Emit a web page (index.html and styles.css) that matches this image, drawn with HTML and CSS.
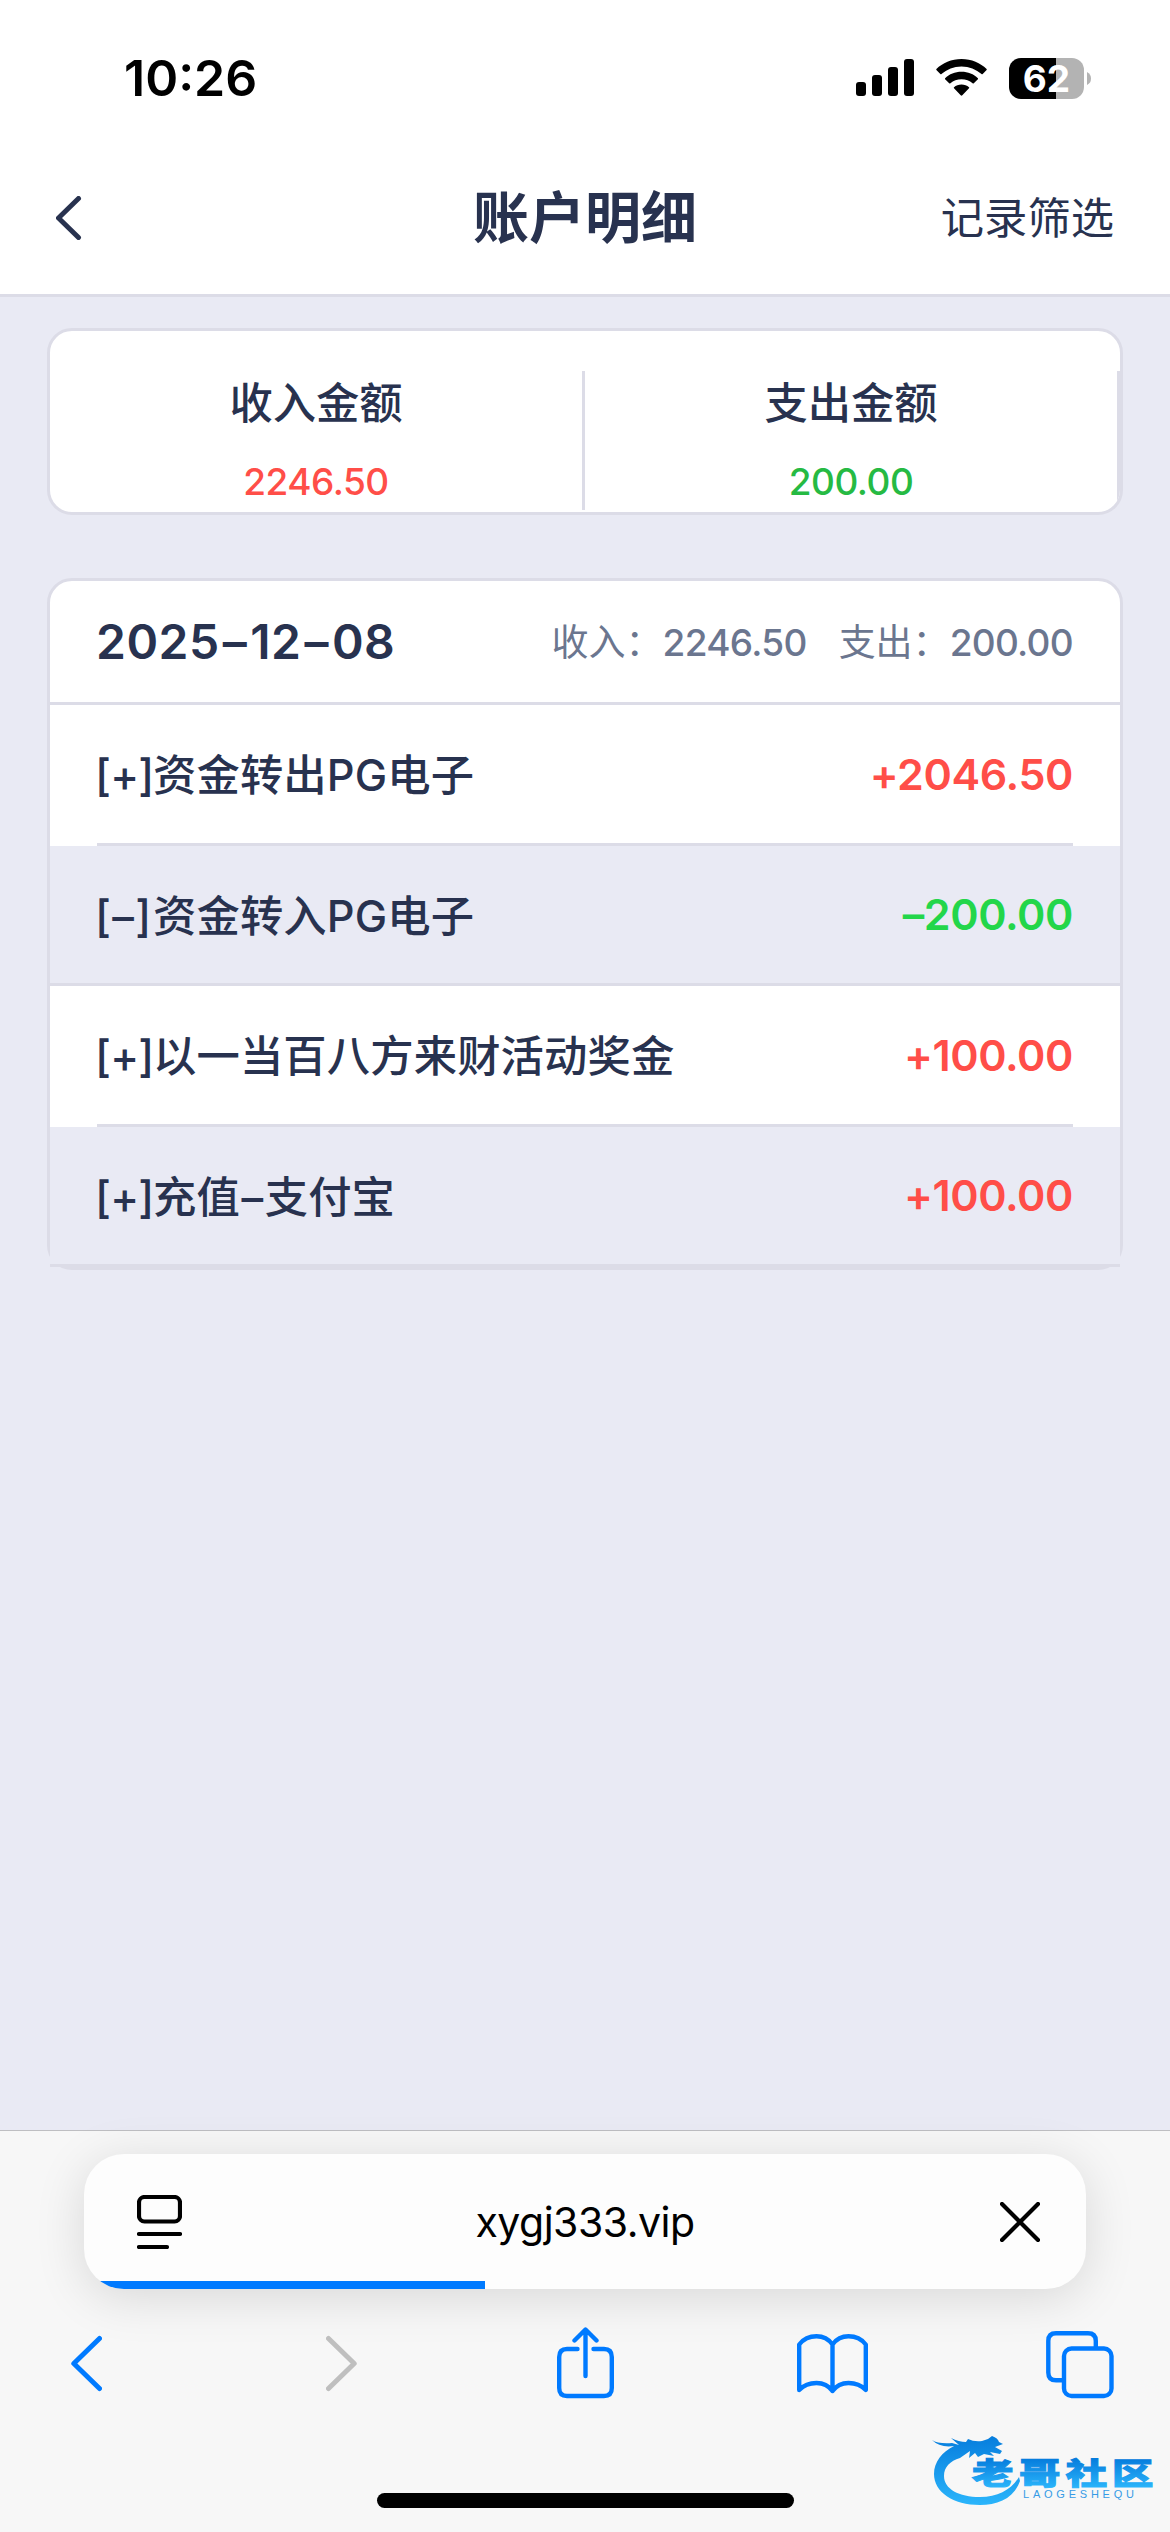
FILE: index.html
```html
<!DOCTYPE html>
<html lang="zh-CN">
<head>
<meta charset="utf-8">
<title>账户明细</title>
<link rel="stylesheet" href="styles.css">
</head>
<body>
<div class="screen">
  <header class="top">
    <div class="status">
      <span class="time">10:26</span>
      <div class="status-icons">
        <svg class="signal" width="58" height="38" viewBox="0 0 58 38">
          <rect x="0" y="23" width="10" height="14" rx="3"/>
          <rect x="16" y="16" width="10" height="21" rx="3"/>
          <rect x="32" y="8" width="10" height="29" rx="3"/>
          <rect x="48" y="0" width="10" height="37" rx="3"/>
        </svg>
        <svg class="wifi" width="51" height="38" viewBox="0 0 51 38">
          <path d="M25.500 0C35.500 0 44.500 4 50.600 10Q51 10.500 50.600 11L46.700 15Q46.100 15.500 45.500 15C40.200 10.300 33.200 7.400 25.500 7.400S10.800 10.300 5.500 15Q4.900 15.500 4.300 15L.4 11Q0 10.500.4 10C6.500 4 15.500 0 25.500 0Z"/>
          <path d="M25.500 12.800C32 12.800 37.700 15.200 41.900 19.200Q42.300 19.700 41.900 20.200L37.800 24.300Q37.200 24.800 36.600 24.300C33.600 21.700 29.800 20.200 25.500 20.200S17.400 21.700 14.400 24.300Q13.800 24.800 13.200 24.300L9.100 20.200Q8.700 19.700 9.100 19.200C13.300 15.200 19 12.800 25.500 12.800Z"/>
          <path d="M25.500 25.500C28.400 25.500 31 26.500 33 28.200Q33.500 28.700 33 29.200L26.300 36.300Q25.500 37.100 24.700 36.300L18 29.200Q17.500 28.700 18 28.200C20 26.500 22.600 25.500 25.500 25.500Z"/>
        </svg>
        <div class="battery"><span class="level">62</span>
          <svg width="4" height="13" viewBox="0 0 4 13"><path d="M0 0Q4 2 4 6.500T0 13Z"/></svg>
        </div>
      </div>
    </div>
    <nav class="nav">
      <svg class="nav-back" width="26" height="44" viewBox="0 0 26 44"><path d="M22.500 2.500 2.500 22 22.500 41.500"/></svg>
      <h1>账户明细</h1>
      <a class="filter">记录筛选</a>
    </nav>
  </header>

  <main class="content">
    <section class="card totals">
      <div class="total"><span class="label">收入金额</span><span class="sum in">2246.50</span></div>
      <div class="total"><span class="label">支出金额</span><span class="sum out">200.00</span></div>
    </section>

    <section class="card day">
      <div class="day-head">
        <span class="date">2025<i>–</i>12<i>–</i>08</span>
        <div class="day-sums">
          <span>收入：<b>2246.50</b></span>
          <span>支出：<b>200.00</b></span>
        </div>
      </div>
      <div class="row"><div class="row-in"><span class="name"><span class="mark">[+]</span>资金转出PG电子</span><span class="amount plus">+2046.50</span></div></div>
      <div class="row alt"><div class="row-in"><span class="name"><span class="mark dash">[–]</span>资金转入PG电子</span><span class="amount minus">–200.00</span></div></div>
      <div class="row"><div class="row-in"><span class="name"><span class="mark">[+]</span>以一当百八方来财活动奖金</span><span class="amount plus">+100.00</span></div></div>
      <div class="row alt"><div class="row-in"><span class="name"><span class="mark">[+]</span>充值<i>–</i>支付宝</span><span class="amount plus">+100.00</span></div></div>
    </section>
  </main>

  <footer class="browser">
    <div class="address">
      <svg width="45" height="54" viewBox="0 0 45 54"><rect x="2" y="2" width="41" height="24.500" rx="5.500"/><path d="M2 39H43M2 52H30"/></svg>
      <span class="url">xygj333.vip</span>
      <svg width="40" height="40" viewBox="0 0 40 40"><path d="M2 2 38 38M38 2 2 38"/></svg>
    </div>
    <div class="tools">
      <svg width="31" height="72" viewBox="0 0 31 72"><path d="M28.500 11.500 2.800 36.500 28.500 61.500"/></svg>
      <svg class="off" width="31" height="72" viewBox="0 0 31 72"><path d="M2.500 11.500 28.200 36.500 2.500 61.500"/></svg>
      <svg class="thin" width="57" height="72" viewBox="0 0 57 72"><path d="M20.500 22H10Q2.200 22 2.200 30V61Q2.200 69 10 69H47Q54.800 69 54.800 61V30Q54.800 22 47 22H36.500M28.500 49V3M17.500 13.500 28.500 2.500 39.500 13.500"/></svg>
      <svg class="thin" width="71" height="72" viewBox="0 0 71 72"><path d="M35.500 17.500C31.500 12 26 9.300 19.500 9.300S6.500 12 2.200 17.500V63C6.500 58.500 12 56 19.500 56S31.500 58.500 35.500 64C39.500 58.500 44 56 51.500 56S64.500 58.500 68.800 63V17.500C64.500 12 58 9.300 51.500 9.300S39.500 12 35.500 17.500ZM35.500 17.500V64"/></svg>
      <svg class="thin" width="68" height="72" viewBox="0 0 68 72"><rect x="18" y="21.500" width="47.500" height="47.500" rx="7.500"/><path d="M49.800 20V14Q49.800 6.300 42 6.300H10Q2.300 6.300 2.300 14V45.500Q2.300 53.300 10 53.300H17"/></svg>
    </div>
    <div class="home"></div>
  </footer>

  <svg class="watermark" width="226" height="78" viewBox="0 0 226 78">
    <defs>
      <linearGradient id="wave" x1="0" y1="0" x2="0" y2="1"><stop offset="0" stop-color="#067ddd"/><stop offset="1" stop-color="#2bb5fb"/></linearGradient>
      <linearGradient id="ink" gradientUnits="userSpaceOnUse" x1="0" y1="28" x2="0" y2="57"><stop offset="0" stop-color="#067ddd"/><stop offset="1" stop-color="#2bb5fb"/></linearGradient>
    </defs>
    <path fill="url(#wave)" d="M0 9Q6 13 20 12L27 14 19 7Q27 11 34 11L36 8Q42 11 50 10L56 8 60 5Q66 7 67 11L71 13 63 16 70 20 68 23 58 21 62 25 52 23 46 26 43 22 37 27 38 20 28 27C18 30 12 36 12 45C12 58 27 66 48 66C66 66 79 59 87 46L88 50C82 67 66 74 48 74C21 74 2 61 2 43C2 31 10 21 22 15Q8 17 0 9Z"/>
    <g class="wm-name" transform="scale(1.38 1)">
      <text x="29" y="53.500">老</text><text x="63" y="53.500">哥</text><text x="97" y="53.500">社</text><text x="130.500" y="53.500">区</text>
    </g>
    <text class="wm-latin" x="91" y="67" textLength="111">LAOGESHEQU</text>
  </svg>
</div>
</body>
</html>
```
FILE: styles.css
```css
* { box-sizing: border-box; }

body {
  margin: 0;
  background: #e9eaf4;
  color: #28324f;
  font-family: Inter, "Noto Sans CJK SC", sans-serif;
}

.screen {
  position: relative;
  display: flex;
  flex-direction: column;
  width: 1170px;
  height: 2532px;
  overflow: hidden;
}

/* status bar and page title */
.top {
  height: 297px;
  background: #fff;
  border-bottom: 3px solid #dcdce7;
}

.status {
  display: flex;
  justify-content: space-between;
  align-items: center;
  height: 141px;
  padding: 15px 79px 0 124px;
  color: #000;
}

.time {
  font-size: 50px;
  font-weight: 600;
  line-height: 60px;
}

.status-icons { display: flex; align-items: center; gap: 22px; }

.battery { display: flex; align-items: center; gap: 3px; }
.battery svg { fill: #b3b3b3; }

.level {
  width: 75px;
  height: 41px;
  border-radius: 12px;
  background: linear-gradient(90deg, #000 47px, #b3b3b3 47px);
  color: #fff;
  font-size: 37px;
  font-weight: 700;
  line-height: 41px;
  text-align: center;
}

.nav {
  display: grid;
  grid-template-columns: 1fr auto 1fr;
  align-items: center;
  height: 153px;
  padding: 0 56px;
}

.nav-back { fill: none; stroke: #28324f; stroke-width: 5; stroke-linecap: round; stroke-linejoin: round; }

h1 { margin: 0; font-size: 56px; font-weight: 600; line-height: 80px; }

.filter { justify-self: end; font-size: 43.3px; line-height: 60px; }

/* account cards */
.content {
  flex: 1;
  padding: 31px 47px 0;
  font-feature-settings: "calt" 0;
}

.card {
  background: #fff;
  border: 3px solid #dcdce7;
  border-radius: 25px;
}

.totals {
  display: flex;
  height: 187px;
  padding-top: 40px;
  overflow: hidden;
}

.total {
  display: flex;
  flex: 1;
  flex-direction: column;
  align-items: center;
  height: 139px;
  border-right: 3px solid #dcdce7;
}

.label { font-size: 43.3px; font-weight: 500; line-height: 65px; }
.sum { margin-top: 24px; font-size: 37px; font-weight: 450; line-height: 44px; letter-spacing: -0.5px; }
.in { color: #ff4e48; }
.out { color: #26ba43; }

.day { margin-top: 63px; height: 692px; }

.day-head {
  display: flex;
  justify-content: space-between;
  align-items: center;
  height: 124px;
  padding: 0 47px;
  border-bottom: 3px solid #dcdce7;
}

.date { margin-left: -1px; font-size: 48px; font-weight: 600; letter-spacing: 0.5px; }
.date i { margin: 0 3px; font-style: normal; }

.day-sums { display: flex; gap: 32px; padding-bottom: 3px; color: #6b768f; font-size: 37px; }
.day-sums b { font-weight: 450; letter-spacing: -0.7px; }

.row { height: 140.5px; padding: 0 47px; background: #fff; }

.row-in {
  display: flex;
  justify-content: space-between;
  align-items: center;
  height: 100%;
  border-bottom: 3px solid #dcdce7;
}

.alt { padding: 0; background: #e9eaf4; }
.alt .row-in { padding: 0 47px; }

.name { padding-bottom: 3px; font-size: 43.3px; font-weight: 500; letter-spacing: 0.15px; }
.name i { margin: 0 1.5px; font-style: normal; }
.mark { display: inline-block; width: 58px; margin-left: -2px; letter-spacing: -0.8px; white-space: nowrap; }
.dash { letter-spacing: 1.3px; }
.amount { font-size: 43px; font-weight: 600; letter-spacing: -0.4px; }
.plus { color: #ff4e48; }
.minus { color: #23d64a; }

/* browser chrome */
.browser {
  display: flex;
  flex-direction: column;
  align-items: center;
  height: 402px;
  padding-top: 23px;
  background: #f7f7f7;
  border-top: 1px solid #bebec2;
}

.address {
  display: flex;
  align-items: center;
  width: 1002px;
  height: 135px;
  padding: 0 46px 0 53px;
  border-radius: 40px;
  background: linear-gradient(#007aff, #007aff) 0 100% / 401px 8px no-repeat #fdfdfd;
  box-shadow: 0 8px 50px rgba(0, 0, 0, 0.13);
}

.address svg { fill: none; stroke: #000; stroke-width: 4.2; stroke-linecap: round; }

.url {
  flex: 1;
  padding-right: 12px;
  color: #000;
  font-size: 41px;
  line-height: 50px;
  letter-spacing: -0.5px;
  text-align: center;
}

.tools {
  display: grid;
  grid-template-columns: 255px 231px 240px 249px 68px;
  align-self: stretch;
  margin-top: 38px;
  padding-left: 71px;
}

.tools svg { fill: none; stroke: #007aff; stroke-width: 5; stroke-linecap: round; stroke-linejoin: round; }
.tools .thin { stroke-width: 4.400; }
.tools .off { stroke: #bfbfbf; }

.home {
  width: 417px;
  height: 15px;
  margin-top: 94px;
  border-radius: 8px;
  background: #000;
}

/* community mark laid over the page corner */
.watermark { position: absolute; left: 932px; top: 2431px; }

.wm-name {
  fill: url(#ink);
  stroke: url(#ink);
  stroke-width: 1;
  font-family: "Noto Sans CJK SC", sans-serif;
  font-size: 30px;
  font-weight: 900;
}

.wm-latin { fill: #369be6; font: 11px "Liberation Sans", sans-serif; }
```
